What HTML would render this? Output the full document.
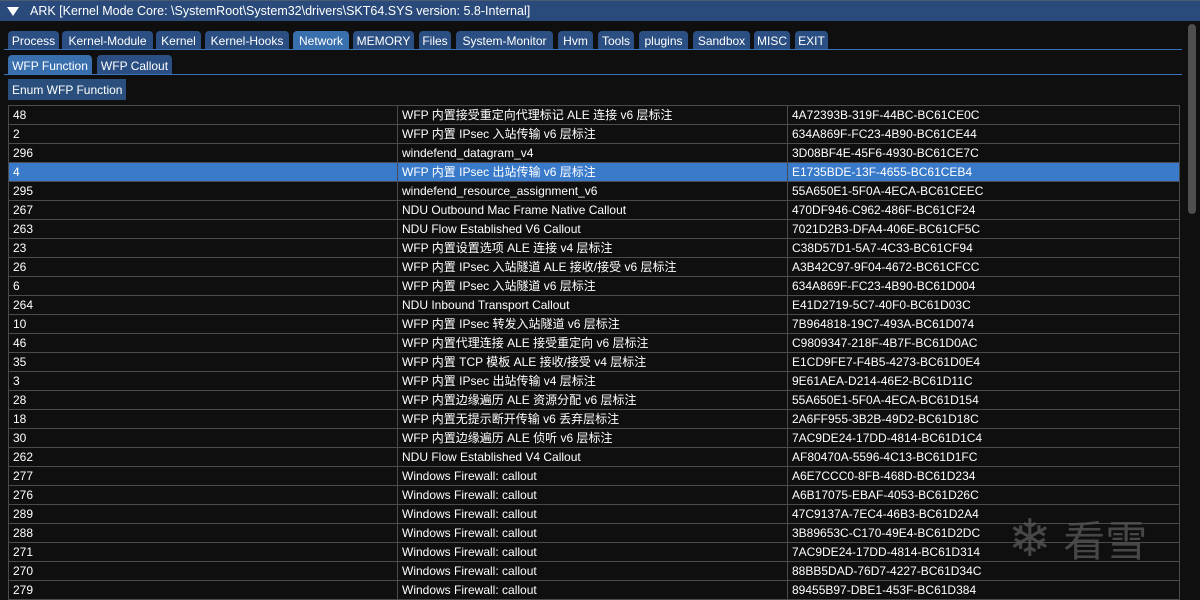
<!DOCTYPE html>
<html><head><meta charset="utf-8"><style>
*{margin:0;padding:0;box-sizing:border-box}
body{width:1200px;height:600px;background:#0f0f0f;font-family:"Liberation Sans","Noto Sans CJK SC",sans-serif;font-size:12px;color:#fff;position:relative;overflow:hidden}
.title{position:absolute;left:0;top:0;width:1200px;height:21px;background:#294a7a;border-top:1px solid #4a5a70;line-height:20px;padding-left:30px;font-size:12.5px}
.tri{position:absolute;left:7px;top:6px;width:0;height:0;border-left:6px solid transparent;border-right:6px solid transparent;border-top:9px solid #fff}
.tab{position:absolute;height:18px;background:#2b4f82;border-radius:4px 4px 0 0;line-height:20px;text-align:center;font-size:12px}
.sel{background:#3a6fae}
.line{position:absolute;left:4px;width:1178px;height:1px;background:#3a72bb}
.btn{position:absolute;left:8px;top:79px;width:118px;height:21px;background:#2b4f7c;line-height:23px;padding-left:4px}
table{position:absolute;left:8px;top:105px;width:1171px;border-collapse:collapse;table-layout:fixed}
td{height:19px;border:1px solid #4a4a4f;padding-left:4px;white-space:nowrap;overflow:hidden;font-size:12px;line-height:17px}
tr.s td{background:#3a7acb}
.sb{position:absolute;left:1188px;top:24px;width:8px;height:190px;background:#4f4f4f;border-radius:4px}
.wm{position:absolute;left:1008px;top:508px;color:#555;font-size:42px;opacity:.8}
</style></head><body>
<div class="title"><div class="tri"></div>ARK [Kernel Mode Core: \SystemRoot\System32\drivers\SKT64.SYS version: 5.8-Internal]</div>
<div class="tab" style="left:8px;top:31px;width:51px">Process</div>
<div class="tab" style="left:62px;top:31px;width:91px">Kernel-Module</div>
<div class="tab" style="left:156px;top:31px;width:45px">Kernel</div>
<div class="tab" style="left:205px;top:31px;width:84px">Kernel-Hooks</div>
<div class="tab sel" style="left:293px;top:31px;width:56px">Network</div>
<div class="tab" style="left:353px;top:31px;width:61px">MEMORY</div>
<div class="tab" style="left:419px;top:31px;width:32px">Files</div>
<div class="tab" style="left:456px;top:31px;width:97px">System-Monitor</div>
<div class="tab" style="left:558px;top:31px;width:35px">Hvm</div>
<div class="tab" style="left:598px;top:31px;width:36px">Tools</div>
<div class="tab" style="left:639px;top:31px;width:49px">plugins</div>
<div class="tab" style="left:693px;top:31px;width:57px">Sandbox</div>
<div class="tab" style="left:754px;top:31px;width:36px">MISC</div>
<div class="tab" style="left:795px;top:31px;width:33px">EXIT</div>
<div class="line" style="top:49px"></div>
<div class="tab sel" style="left:8px;top:55px;width:84px;height:19px;line-height:22px">WFP Function</div>
<div class="tab" style="left:97px;top:55px;width:75px;height:19px;line-height:22px">WFP Callout</div>
<div class="line" style="top:74px"></div>
<div class="btn">Enum WFP Function</div>
<table>
<colgroup><col style="width:389px"><col style="width:390px"><col style="width:392px"></colgroup>
<tr><td>48</td><td>WFP 内置接受重定向代理标记 ALE 连接 v6 层标注</td><td>4A72393B-319F-44BC-BC61CE0C</td></tr>
<tr><td>2</td><td>WFP 内置 IPsec 入站传输 v6 层标注</td><td>634A869F-FC23-4B90-BC61CE44</td></tr>
<tr><td>296</td><td>windefend_datagram_v4</td><td>3D08BF4E-45F6-4930-BC61CE7C</td></tr>
<tr class="s"><td>4</td><td>WFP 内置 IPsec 出站传输 v6 层标注</td><td>E1735BDE-13F-4655-BC61CEB4</td></tr>
<tr><td>295</td><td>windefend_resource_assignment_v6</td><td>55A650E1-5F0A-4ECA-BC61CEEC</td></tr>
<tr><td>267</td><td>NDU Outbound Mac Frame Native Callout</td><td>470DF946-C962-486F-BC61CF24</td></tr>
<tr><td>263</td><td>NDU Flow Established V6 Callout</td><td>7021D2B3-DFA4-406E-BC61CF5C</td></tr>
<tr><td>23</td><td>WFP 内置设置选项 ALE 连接 v4 层标注</td><td>C38D57D1-5A7-4C33-BC61CF94</td></tr>
<tr><td>26</td><td>WFP 内置 IPsec 入站隧道 ALE 接收/接受 v6 层标注</td><td>A3B42C97-9F04-4672-BC61CFCC</td></tr>
<tr><td>6</td><td>WFP 内置 IPsec 入站隧道 v6 层标注</td><td>634A869F-FC23-4B90-BC61D004</td></tr>
<tr><td>264</td><td>NDU Inbound Transport Callout</td><td>E41D2719-5C7-40F0-BC61D03C</td></tr>
<tr><td>10</td><td>WFP 内置 IPsec 转发入站隧道 v6 层标注</td><td>7B964818-19C7-493A-BC61D074</td></tr>
<tr><td>46</td><td>WFP 内置代理连接 ALE 接受重定向 v6 层标注</td><td>C9809347-218F-4B7F-BC61D0AC</td></tr>
<tr><td>35</td><td>WFP 内置 TCP 模板 ALE 接收/接受 v4 层标注</td><td>E1CD9FE7-F4B5-4273-BC61D0E4</td></tr>
<tr><td>3</td><td>WFP 内置 IPsec 出站传输 v4 层标注</td><td>9E61AEA-D214-46E2-BC61D11C</td></tr>
<tr><td>28</td><td>WFP 内置边缘遍历 ALE 资源分配 v6 层标注</td><td>55A650E1-5F0A-4ECA-BC61D154</td></tr>
<tr><td>18</td><td>WFP 内置无提示断开传输 v6 丢弃层标注</td><td>2A6FF955-3B2B-49D2-BC61D18C</td></tr>
<tr><td>30</td><td>WFP 内置边缘遍历 ALE 侦听 v6 层标注</td><td>7AC9DE24-17DD-4814-BC61D1C4</td></tr>
<tr><td>262</td><td>NDU Flow Established V4 Callout</td><td>AF80470A-5596-4C13-BC61D1FC</td></tr>
<tr><td>277</td><td>Windows Firewall: callout</td><td>A6E7CCC0-8FB-468D-BC61D234</td></tr>
<tr><td>276</td><td>Windows Firewall: callout</td><td>A6B17075-EBAF-4053-BC61D26C</td></tr>
<tr><td>289</td><td>Windows Firewall: callout</td><td>47C9137A-7EC4-46B3-BC61D2A4</td></tr>
<tr><td>288</td><td>Windows Firewall: callout</td><td>3B89653C-C170-49E4-BC61D2DC</td></tr>
<tr><td>271</td><td>Windows Firewall: callout</td><td>7AC9DE24-17DD-4814-BC61D314</td></tr>
<tr><td>270</td><td>Windows Firewall: callout</td><td>88BB5DAD-76D7-4227-BC61D34C</td></tr>
<tr><td>279</td><td>Windows Firewall: callout</td><td>89455B97-DBE1-453F-BC61D384</td></tr>
</table>
<div class="sb"></div>
<div class="wm"><span style="font-size:52px">❄</span> 看雪</div>
</body></html>
